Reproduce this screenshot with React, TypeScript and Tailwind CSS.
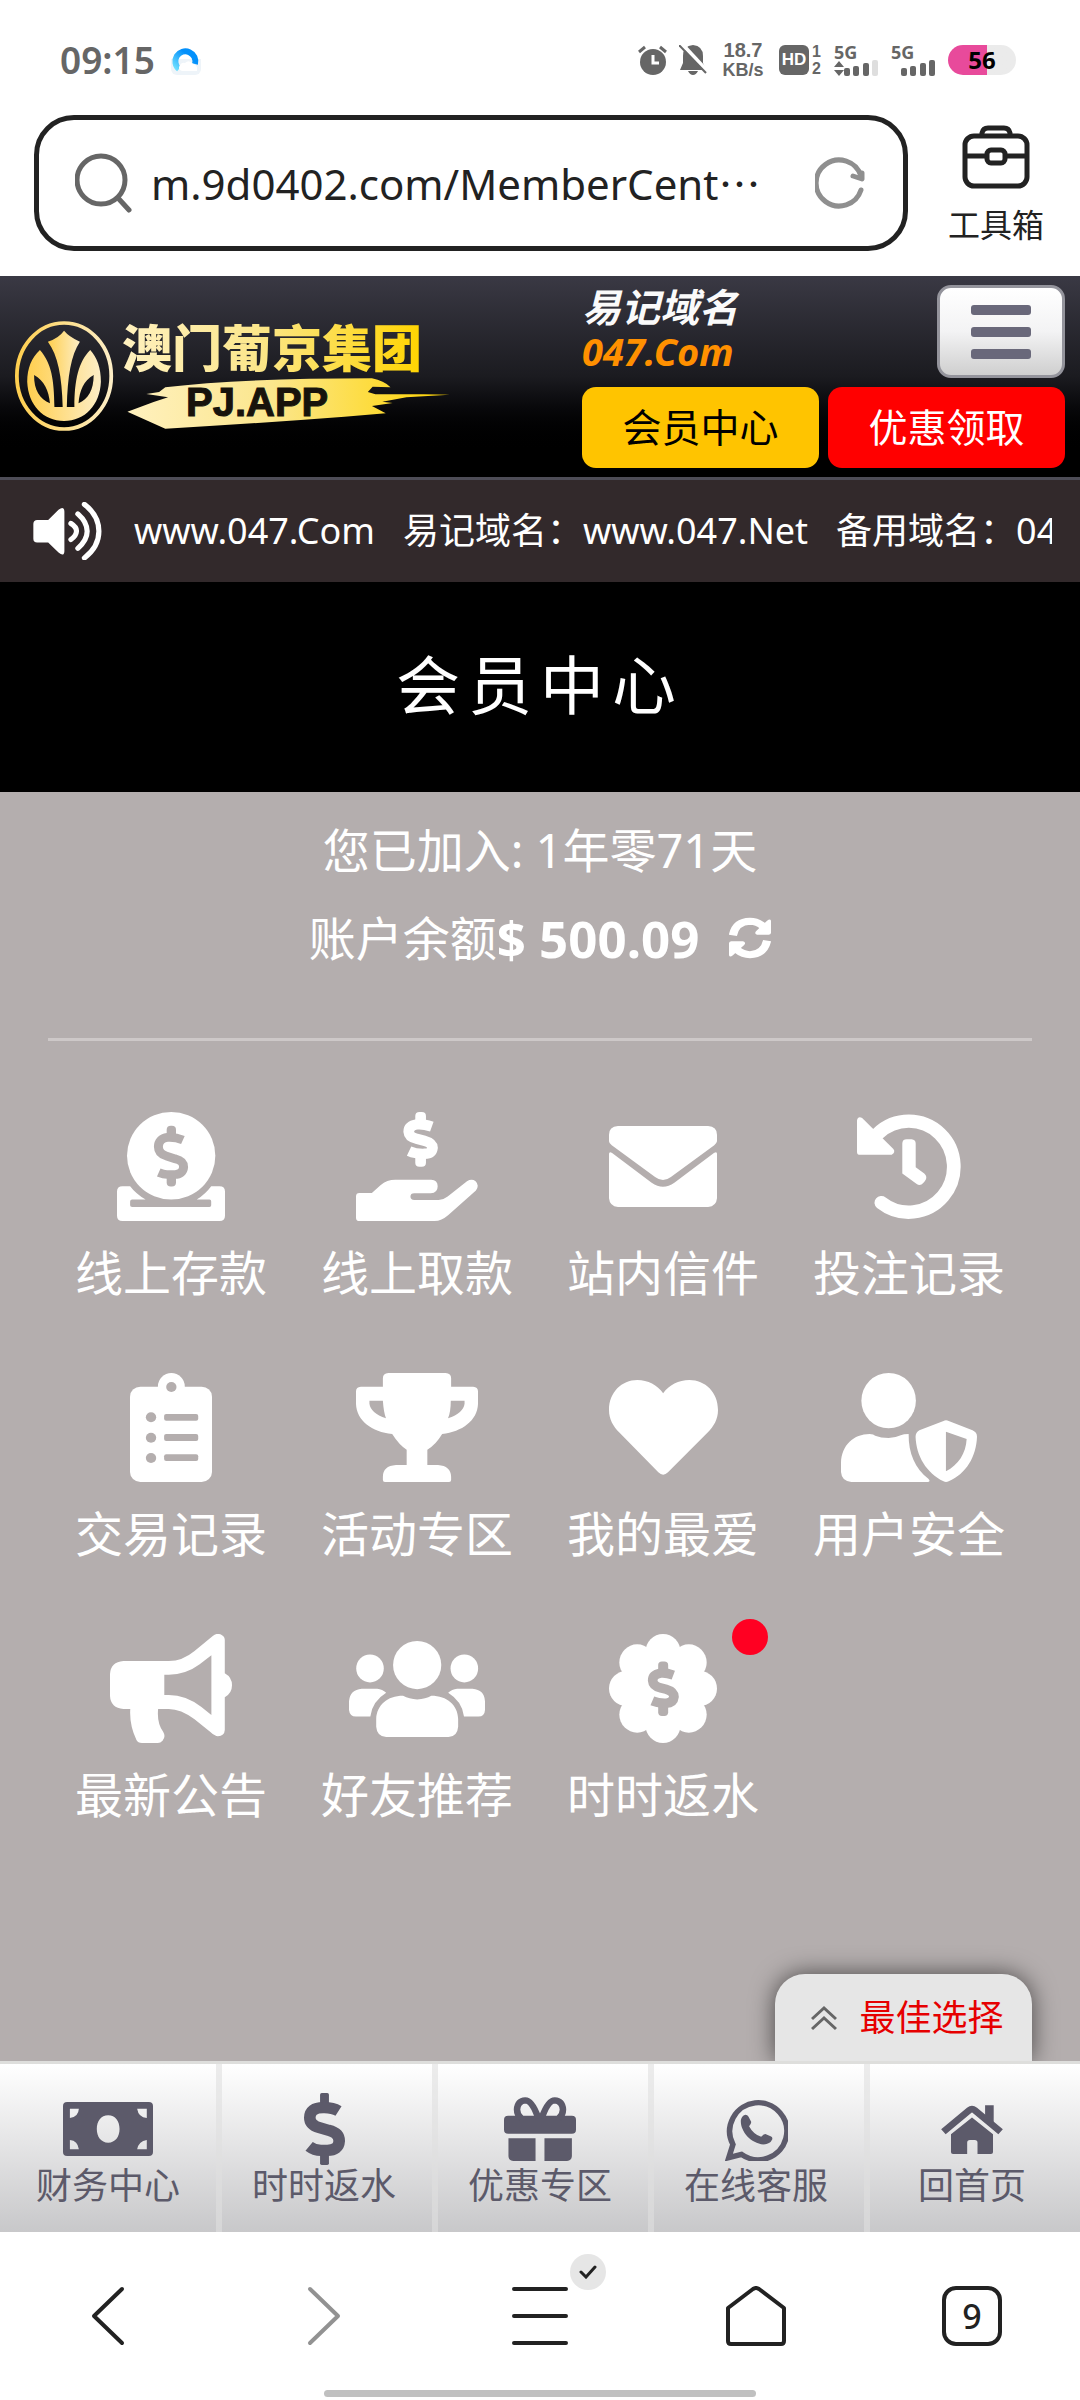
import type { ReactNode } from 'react';

interface GlyphProps {
    box: string;
    w: number;
    h: number;
    children: ReactNode;
}

interface MenuItem {
    label: string;
    icon: ReactNode;
    badge?: boolean;
}

const Glyph = ({ box, w, h, children }: GlyphProps) => (
    <svg viewBox={box} width={w} height={h} preserveAspectRatio="none" fill="currentColor" fillRule="evenodd" aria-hidden="true">
        {children}
    </svg>
);

const DepositIcon = () => (
    <Glyph box="340 97 313 326" w={108} h={109}>
        <ellipse cx="497" cy="228" rx="128" ry="131" />
        <path d="M378 319H356Q340 319 340 335V407Q340 423 356 423H637Q653 423 653 407V335Q653 319 637 319H613Q597 342 571 359H608Q613 359 613 365V376Q613 381 608 381H384Q378 381 378 376V365Q378 359 384 359H423Q395 342 378 319Z" />
        <g className="fill-[#b4aeae] stroke-[#b4aeae]">
            <rect x="484" y="138" width="27" height="36" rx="12" stroke="none" />
            <rect x="484" y="284" width="27" height="36" rx="12" stroke="none" />
            <path d="M531 181C515 174 500 172 486 173C469 175 460 186 460 201C460 218 470 225 484 229L508 237C524 241 533 247 533 262C532 276 522 284 508 284H485Q475 284 461 278" fill="none" strokeWidth="26" />
        </g>
    </Glyph>
);

const WithdrawIcon = () => (
    <Glyph box="1034 97 354 326" w={122} h={109}>
        <rect x="1206" y="97" width="31" height="40" rx="12" />
        <rect x="1206" y="222" width="31" height="39" rx="12" />
        <path d="M1254 141Q1228 132 1211 134Q1187 138 1187 156Q1188 172 1210 177L1232 183Q1256 190 1256 204Q1254 222 1233 222Q1208 223 1188 214" fill="none" stroke="currentColor" strokeWidth="31" />
        <path d="M1034 349Q1034 339 1044 339H1080L1105 316Q1124 300 1148 300H1252Q1271 301 1271 319Q1271 339 1251 340H1203Q1192 340 1192 350Q1192 360 1203 360H1274Q1288 360 1300 350L1356 304Q1370 296 1381 304Q1393 316 1382 332L1302 405Q1282 423 1262 423H1044Q1034 423 1034 413Z" />
    </Glyph>
);

const MailIcon = () => (
    <Glyph box="200 138 314 243" w={108} h={81}>
        <path d="M226 138H488Q514 140 514 164V184Q513 190 506 196L380 291Q357 309 334 291L208 196Q200 190 200 184V164Q200 140 226 138Z" />
        <path d="M200 221Q201 213 209 219L324 308Q357 332 390 308L505 219Q514 213 514 221V355Q512 379 488 381H226Q202 379 200 355Z" />
    </Glyph>
);

const HistoryIcon = () => (
    <Glyph box="919 101 303 316" w={104} h={105}>
        <path d="M990 368A131 137 0 1 0 980 160" fill="none" stroke="currentColor" strokeWidth="40" strokeLinecap="round" />
        <path d="M919 120Q922 106 934 113L1025 206Q1032 216 1020 224H928Q919 224 919 215Z" />
        <path d="M1051 190Q1051 177 1064 177H1078Q1090 178 1090 190V261L1115 280Q1126 290 1117 303L1112 309Q1103 319 1092 311L1051 280Z" />
    </Glyph>
);

const ClipboardIcon = () => (
    <Glyph box="377 879 238 327" w={82} h={109}>
        <rect x="377" y="920" width="238" height="286" rx="30" />
        <ellipse cx="497" cy="919" rx="39" ry="40" />
        <g className="fill-[#b4aeae]">
            <circle cx="497" cy="921" r="15" />
            <circle cx="438" cy="1012" r="15" />
            <circle cx="438" cy="1073" r="15" />
            <circle cx="438" cy="1134" r="15" />
            <rect x="476" y="1002" width="99" height="20" rx="6" />
            <rect x="476" y="1062" width="99" height="21" rx="6" />
            <rect x="476" y="1123" width="99" height="20" rx="6" />
        </g>
    </Glyph>
);

const TrophyIcon = () => (
    <Glyph box="1034 879 354 327" w={122} h={109}>
        <path d="M1128 879H1294Q1310 880 1310 895V920H1374Q1388 921 1388 934V972C1386 1022 1342 1055 1284 1062Q1265 1095 1241 1109V1155H1272Q1309 1158 1310 1190V1200Q1310 1206 1304 1206H1118Q1112 1206 1112 1200V1190Q1112 1158 1150 1155H1181V1109Q1160 1096 1139 1062C1080 1056 1036 1022 1034 972V934Q1034 921 1048 920H1112V895Q1112 880 1128 879ZM1073 962H1112Q1114 995 1121 1015Q1076 998 1073 971ZM1349 962H1309Q1309 995 1301 1015Q1346 998 1349 971Z" />
    </Glyph>
);

const HeartIcon = () => (
    <Glyph box="200 900 316 286" w={109} h={95}>
        <path d="M357 940C340 915 313 900 282 900C237 900 200 937 200 990C200 1018 212 1039 230 1058L343 1178Q357 1192 371 1178L486 1058C504 1039 516 1018 516 990C516 937 479 900 433 900C402 900 374 915 357 940Z" />
    </Glyph>
);

const UserShieldIcon = () => (
    <Glyph box="875 879 394 327" w={136} h={109}>
        <ellipse cx="1013" cy="962" rx="79" ry="83" />
        <path d="M958 1062Q970 1062 974 1067Q990 1074 1013 1074Q1032 1074 1048 1066Q1056 1062 1071 1062C1070 1120 1090 1166 1128 1196Q1136 1204 1126 1206H905Q877 1204 875 1176V1148C877 1095 912 1062 958 1062Z" />
        <path d="M1172 1023Q1179 1019 1187 1023L1256 1051Q1269 1057 1269 1070C1267 1130 1238 1180 1187 1204Q1179 1208 1172 1204C1122 1178 1093 1128 1091 1070Q1091 1058 1102 1051ZM1179 1055V1174C1215 1155 1237 1120 1239 1077Z" />
    </Glyph>
);

const BullhornIcon = () => (
    <Glyph box="319 132 355 327" w={122} h={109}>
        <path d="M358 213H490Q530 213 565 183L618 138Q630 127 644 135Q653 140 653 150V250Q674 262 674 286Q674 310 653 322V420Q652 438 633 439Q624 438 612 427L565 388Q525 357 490 357H459Q455 400 474 426Q482 440 472 452Q466 459 458 459H412Q400 459 396 450Q375 405 378 357H358Q321 354 319 318V252Q321 216 358 213ZM477 254V315H490Q540 315 585 351L614 375V196L580 223Q540 254 490 254Z" />
    </Glyph>
);

const UsersIcon = () => (
    <Glyph box="1013 152 395 287" w={136} h={96}>
        <ellipse cx="1211" cy="224" rx="70" ry="72" />
        <ellipse cx="1074" cy="234" rx="40" ry="42" />
        <ellipse cx="1348" cy="234" rx="40" ry="42" />
        <path d="M1170 316Q1188 326 1211 327Q1236 326 1252 316C1298 316 1329 344 1330 385V408Q1328 437 1302 439H1121Q1094 437 1092 408V385C1094 344 1124 316 1170 316Z" />
        <path d="M1050 295H1095Q1110 296 1121 307Q1080 333 1075 378H1033Q1015 377 1013 358V332Q1016 298 1050 295Z" />
        <path d="M1372 295H1327Q1312 296 1301 307Q1342 333 1347 378H1389Q1407 377 1408 358V332Q1406 298 1372 295Z" />
    </Glyph>
);

const RebateIcon = () => (
    <Glyph box="200 133 314 326" w={108} h={109}>
        <ellipse cx="357" cy="296" rx="115" ry="119" />
        <ellipse cx="357" cy="186" rx="51" ry="53" />
        <ellipse cx="357" cy="406" rx="51" ry="53" />
        <ellipse cx="251" cy="296" rx="51" ry="53" />
        <ellipse cx="463" cy="296" rx="51" ry="53" />
        <ellipse cx="282" cy="218" rx="52" ry="54" />
        <ellipse cx="432" cy="218" rx="52" ry="54" />
        <ellipse cx="282" cy="374" rx="52" ry="54" />
        <ellipse cx="432" cy="374" rx="52" ry="54" />
        <g className="fill-[#b4aeae] stroke-[#b4aeae]">
            <rect x="343" y="215" width="29" height="36" rx="11" stroke="none" />
            <rect x="343" y="342" width="29" height="36" rx="11" stroke="none" />
            <path d="M387 256Q365 248 350 250Q327 254 327 272Q328 289 350 294L366 298Q389 305 389 321Q387 340 366 340Q345 341 326 333" fill="none" strokeWidth="28" />
        </g>
    </Glyph>
);

const MoneyIcon = () => (
    <Glyph box="183 486 261 162" w={90} h={54}>
        <path d="M195 486H432Q444 486 444 498V636Q444 648 432 648H195Q183 648 183 636V498Q183 486 195 486ZM203 506V534Q228 530 229 506ZM426 506H398Q402 532 426 534ZM203 628H229Q226 602 203 600ZM426 628V600Q402 604 398 628ZM314 526C293 526 281 544 281 567C281 590 293 608 314 608C335 608 347 590 347 567C347 544 335 526 314 526Z" />
    </Glyph>
);

const DollarIcon = () => (
    <Glyph box="882 459 120 216" w={41} h={72}>
        <rect x="929" y="459" width="26" height="45" rx="5" />
        <rect x="929" y="630" width="26" height="45" rx="5" />
        <path d="M983 513C965 502 950 503 938 503C912 503 899 513 899 533C899 550 911 558 927 563L954 571C974 576 985 586 985 603C984 622 972 631 950 631H932Q912 631 897 619" fill="none" stroke="currentColor" strokeWidth="34" />
    </Glyph>
);

const GiftIcon = () => (
    <Glyph box="0 471 210 191" w={72} h={64}>
        <rect x="0" y="527" width="210" height="54" rx="12" />
        <path d="M13 594H92V662H27Q13 661 13 648ZM118 594H198V648Q197 661 184 662H118Z" />
        <path d="M100 534Q82 481 62 481Q40 482 38 508Q38 524 50 534M110 534Q128 481 148 481Q170 482 172 508Q172 524 160 534" fill="none" stroke="currentColor" strokeWidth="19" />
    </Glyph>
);

const ServiceIcon = () => (
    <Glyph box="536 471 183 190" w={63} h={63}>
        <path d="M584 641L547 651L559 611A83 86 0 1 1 584 641Z" fill="none" stroke="currentColor" strokeWidth="16" />
        <path d="M593 522Q601 521 604 527L612 543Q613 548 606 556Q618 580 641 588Q648 579 655 580L670 587Q675 590 673 596Q667 610 648 611C610 608 580 570 582 538Q584 526 593 522Z" />
    </Glyph>
);

const HouseIcon = () => (
    <Glyph box="1164 506 180 148" w={62} h={49}>
        <path d="M1171 587L1246 522Q1254 515 1262 522L1337 587" fill="none" stroke="currentColor" strokeWidth="20" />
        <path d="M1292 507H1317V568L1292 546Z" />
        <path d="M1193 594L1254 544L1315 594V648Q1315 654 1309 654H1270V620Q1270 612 1262 612H1248Q1240 612 1240 620V654H1199Q1193 654 1193 648Z" />
    </Glyph>
);

const menuItems: MenuItem[] = [
    { label: '线上存款', icon: <DepositIcon /> },
    { label: '线上取款', icon: <WithdrawIcon /> },
    { label: '站内信件', icon: <MailIcon /> },
    { label: '投注记录', icon: <HistoryIcon /> },
    { label: '交易记录', icon: <ClipboardIcon /> },
    { label: '活动专区', icon: <TrophyIcon /> },
    { label: '我的最爱', icon: <HeartIcon /> },
    { label: '用户安全', icon: <UserShieldIcon /> },
    { label: '最新公告', icon: <BullhornIcon /> },
    { label: '好友推荐', icon: <UsersIcon /> },
    { label: '时时返水', icon: <RebateIcon />, badge: true },
];

const tabs: MenuItem[] = [
    { label: '财务中心', icon: <MoneyIcon /> },
    { label: '时时返水', icon: <DollarIcon /> },
    { label: '优惠专区', icon: <GiftIcon /> },
    { label: '在线客服', icon: <ServiceIcon /> },
    { label: '回首页', icon: <HouseIcon /> },
];

const Signal = ({ weak }: { weak?: boolean }) => (
    <svg width="45" height="40" viewBox="0 -5 45 40" fill="currentColor" aria-hidden="true">
        <text x="0" y="14" fontSize="18" fontWeight="700">5G</text>
        {weak && <path d="M0 22L5 16L10 22ZM0 25H10L5 31Z" />}
        <rect x="10" y="23" width="6" height="8" rx="2" />
        <rect x="19" y="21" width="6" height="10" rx="2" />
        <rect x="29" y="18" width="6" height="13" rx="2" />
        <rect x="38" y="15" width="6" height="16" rx="2" className={weak ? 'fill-[#dedede]' : ''} />
    </svg>
);

const StatusBar = () => (
    <div className="flex h-[115px] items-center justify-between pl-[60px] pr-16 pt-1 text-[#666]">
        <div className="flex items-center gap-4">
            <span className="font-['Noto_Sans'] text-[37px] font-semibold leading-none">09:15</span>
            <svg width="30" height="30" viewBox="0 0 30 30" aria-hidden="true">
                <defs>
                    <linearGradient id="ring" x1="1" y1="0" x2="0" y2="1">
                        <stop offset="0.3" stopColor="#0390fb" />
                        <stop offset="1" stopColor="#6fe0ff" />
                    </linearGradient>
                </defs>
                <rect width="30" height="30" rx="6" fill="#eef4f9" />
                <rect width="30" height="14" fill="#fff" />
                <path d="M8 24A10 10 0 1 1 24 19" fill="none" stroke="url(#ring)" strokeWidth="6" />
                <path d="M11 26Q6 24 9 20Q11 17 14 18Q18 14 22 19Q27 20 26 26Z" fill="#fff" />
            </svg>
        </div>
        <div className="flex items-center gap-3">
            <svg width="29" height="30" viewBox="0 0 29 30" aria-hidden="true">
                <circle cx="15" cy="17" r="13" fill="currentColor" />
                <path d="M1 7L7 2M22 2L28 7" stroke="currentColor" strokeWidth="3" />
                <path d="M15 10V18H21" fill="none" stroke="#fff" strokeWidth="3" />
            </svg>
            <svg width="28" height="30" viewBox="0 0 28 30" aria-hidden="true">
                <path d="M14 0Q24 1 24 11V18L27 25H1L4 18V11Q4 1 14 0ZM9 26H19Q17 30 14 30Q11 30 9 26Z" fill="currentColor" />
                <path d="M3 -1L29 27" stroke="#fff" strokeWidth="4" />
                <path d="M0 0L27 28" stroke="currentColor" strokeWidth="2" />
            </svg>
            <div className="flex w-12 flex-col items-center font-['Liberation_Sans'] text-[20px] font-bold leading-5">
                <span>18.7</span>
                <span className="text-[18px]">KB/s</span>
            </div>
            <div className="flex items-center gap-[2px]">
                <span className="flex h-[30px] w-[30px] items-center justify-center rounded-md bg-[#666] font-['Liberation_Sans'] text-[17px] font-bold text-white">HD</span>
                <span className="flex w-[11px] flex-col items-center font-['Liberation_Sans'] text-[16px] font-bold leading-[17px]">
                    <span>1</span>
                    <span>2</span>
                </span>
            </div>
            <Signal weak />
            <Signal />
            <div className="flex h-[30px] w-[68px] items-center justify-center rounded-full bg-linear-to-r from-[#e84a9b] from-57% to-[#ebebeb] to-57% font-['Open_Sans'] text-[24px] font-bold leading-none text-black">
                56
            </div>
        </div>
    </div>
);

const AddressBar = () => (
    <div className="flex items-center gap-10 pb-[25px] pl-[34px] pr-9">
        <div className="flex h-[136px] flex-1 items-center rounded-[40px] border-[5px] border-[#222] pl-9 pr-[38px]">
            <svg width="58" height="60" viewBox="0 0 58 60" fill="none" stroke="#666" strokeWidth="5" strokeLinecap="round" aria-hidden="true">
                <circle cx="26" cy="27" r="24" />
                <path d="M43 45L54 57" />
            </svg>
            <input
                aria-label="地址"
                readOnly
                value="m.9d0402.com/MemberCent⋯"
                className="min-w-0 flex-1 bg-transparent pl-[18px] font-['Noto_Sans','Noto_Sans_CJK_SC',sans-serif] text-[42px] text-[#222] outline-none"
            />
            <button aria-label="刷新" className="text-[#8f8f8f]">
                <svg width="50" height="52" viewBox="0 0 50 52" fill="none" stroke="currentColor" strokeWidth="5" strokeLinecap="round" aria-hidden="true">
                    <path d="M46 33A23 23 0 1 1 46 19" />
                    <path d="M38 19L47 22V16" strokeLinejoin="round" />
                </svg>
            </button>
        </div>
        <button className="flex flex-col items-center gap-4 pt-1 text-[#222]">
            <svg width="68" height="64" viewBox="0 0 68 64" fill="none" stroke="currentColor" strokeWidth="5" aria-hidden="true">
                <rect x="3" y="11" width="62" height="50" rx="9" />
                <path d="M20 11V8Q21 3 26 3H42Q47 3 48 8V11M3 31H25M43 31H65" />
                <rect x="25" y="25" width="18" height="13" rx="4" />
            </svg>
            <span className="text-[32px] leading-10">工具箱</span>
        </button>
    </div>
);

const Logo = () => (
    <svg width="460" height="200" viewBox="0 0 460 200" role="img" aria-label="澳门葡京集团 PJ.APP">
        <defs>
            <linearGradient id="gold" x1="0" x2="1" y1="0" y2="0">
                <stop offset="0" stopColor="#fff1bf" />
                <stop offset="0.45" stopColor="#fbe68c" />
                <stop offset="1" stopColor="#ffd400" />
            </linearGradient>
            <linearGradient id="emblem" x1="0" x2="1" y1="0" y2="0">
                <stop offset="0" stopColor="#ffcf4f" />
                <stop offset="1" stopColor="#fdeec6" />
            </linearGradient>
        </defs>
        <g transform="translate(0 -6) scale(.3444 .3333)">
            <ellipse cx="186" cy="318" rx="137" ry="159" fill="none" stroke="url(#emblem)" strokeWidth="11" />
            <g fill="url(#emblem)" fillRule="evenodd">
                <path d="M116 240C92 262 79 295 79 335C82 405 125 452 186 453C247 452 290 405 293 335C293 295 282 262 262 240C228 275 216 330 216 411H158C157 330 150 280 116 240ZM99 315C98 360 116 388 145 400C142 362 128 332 99 315ZM272 315C243 332 231 362 228 400C256 388 272 360 272 315Z" />
                <path d="M186 182Q200 200 232 215C206 255 196 320 194 411H182C180 320 168 255 139 215Q171 204 186 182Z" />
            </g>
            <path d="M370 425L446 396L488 382L425 372L462 366L480 352Q700 325 1080 325Q1115 332 1134 352L1082 350L1068 366L1090 373H1230L1305 374L1180 382L1110 395L1140 399L1080 408L1120 430L1000 440Q750 460 480 476Z" fill="url(#gold)" />
        </g>
        <text x="122" y="91" fontSize="50" fontWeight="900" fill="url(#gold)">澳门葡京集团</text>
        <text x="186" y="140" fontSize="40" fontWeight="700" fill="#17130c" stroke="#17130c" className="font-['Liberation_Sans']">PJ.APP</text>
    </svg>
);

const SiteHeader = () => (
    <header className="flex h-[204px] items-start justify-between border-b-[3px] border-[#4e4d57] bg-linear-to-b from-[#3a3944] via-[#1b1b20] to-black to-90% pr-[15px]">
        <Logo />
        <div className="flex flex-col gap-[9px] pt-[9px]">
            <div className="flex items-start justify-between">
                <div className="flex flex-col font-bold italic">
                    <span className="text-[39px] leading-[44px] text-[#fafafa]">易记域名</span>
                    <span className="font-['Noto_Sans'] text-[38px] leading-[45px] text-[#ff9000]">047.Com</span>
                </div>
                <button aria-label="菜单" className="flex h-[93px] w-32 flex-col items-center justify-center gap-3 rounded-[14px] border-[3px] border-[#94949c] bg-linear-to-b from-white via-[#f3f3f4] to-[#cfcfcf]">
                    <span className="h-[10px] w-[60px] rounded-[3px] bg-[#69687a]" />
                    <span className="h-[10px] w-[60px] rounded-[3px] bg-[#69687a]" />
                    <span className="h-[10px] w-[60px] rounded-[3px] bg-[#69687a]" />
                </button>
            </div>
            <div className="flex gap-[9px]">
                <a href="#member" className="flex h-[81px] w-[237px] items-center justify-center rounded-[14px] bg-[#ffc400] text-[39px] text-black">会员中心</a>
                <a href="#promo" className="flex h-[81px] w-[237px] items-center justify-center rounded-[14px] bg-[#ff0000] text-[39px] text-white">优惠领取</a>
            </div>
        </div>
    </header>
);

const Notice = () => (
    <div className="flex h-[102px] items-center gap-8 bg-[#32292b] pl-[33px] pr-7 text-white">
        <svg width="69" height="58" viewBox="96 696 200 170" preserveAspectRatio="none" className="shrink-0" aria-hidden="true">
            <path d="M108 749H140L170 719Q186 706 187 724V840Q186 858 170 844L140 815H108Q97 815 97 804V760Q98 749 108 749Z" fill="currentColor" />
            <path d="M206 759Q223 770 222 782Q221 795 206 806M226 731Q253 755 253 782Q253 808 226 832M245 703Q287 735 287 782Q287 828 245 860" fill="none" stroke="currentColor" strokeWidth="15" strokeLinecap="round" />
        </svg>
        <div className="flex min-w-0 gap-7 overflow-hidden whitespace-nowrap text-[36px]">
            <span>www.047.Com</span>
            <span>易记域名：www.047.Net</span>
            <span>备用域名：047.Com</span>
        </div>
    </div>
);

export default function App() {
    return (
        <div className="flex min-h-screen flex-col bg-white font-['Noto_Sans','Noto_Sans_CJK_SC',sans-serif]" lang="zh-CN">
            <StatusBar />
            <AddressBar />
            <SiteHeader />
            <Notice />

            <h1 className="flex h-[210px] items-center justify-center bg-black pb-1 text-[64px] tracking-[8px] text-white">会员中心</h1>

            <main className="flex flex-1 flex-col overflow-hidden bg-[#b4aeae] px-12 text-white">
                <div className="flex flex-col items-center pt-[14px] text-[47px] leading-[88px]">
                    <p>您已加入: 1年零71天</p>
                    <p className="flex items-center">
                        账户余额<strong className="text-[51px]">$ 500.09</strong>
                        <button aria-label="刷新余额" className="ml-[30px]">
                            <svg width="42" height="42" viewBox="1286 1012 108 126" preserveAspectRatio="none" aria-hidden="true">
                                <path d="M1296 1067Q1303 1026 1340 1025Q1358 1025 1374 1040M1384 1083Q1376 1124 1340 1125Q1322 1125 1306 1110" fill="none" stroke="currentColor" strokeWidth="21" />
                                <path d="M1394 1023V1060Q1393 1065 1388 1065H1358Q1350 1062 1356 1054L1384 1023Q1392 1016 1394 1023ZM1286 1127V1090Q1287 1085 1292 1085H1322Q1331 1088 1325 1096L1296 1127Q1288 1134 1286 1127Z" fill="currentColor" />
                            </svg>
                        </button>
                    </p>
                </div>
                <hr className="mt-14 border-t-[3px] border-[#cdc8c8]" />

                <nav className="mt-[71px] grid grid-cols-4 gap-y-[68px]">
                    {menuItems.map((item) => (
                        <a key={item.label} href="#menu" className="relative flex flex-col items-center gap-5">
                            <span className="flex h-[109px] items-center">{item.icon}</span>
                            <span className="text-[48px] leading-[64px]">{item.label}</span>
                            {item.badge && <span className="absolute -top-[15px] right-[18px] h-9 w-9 rounded-full bg-[#ff0022]" />}
                        </a>
                    ))}
                </nav>

                <button className="mt-auto flex h-[87px] w-[257px] items-center justify-center gap-[22px] self-end rounded-t-[30px] bg-[#e6e6e6] pl-2 text-[36px] text-[#e60000] shadow-[0_0_24px_rgba(0,0,0,0.6)]">
                    <svg width="26" height="26" viewBox="0 0 26 26" fill="none" stroke="#666" strokeWidth="3" aria-hidden="true">
                        <path d="M1 14L13 3L25 14M1 24L13 13L25 24" />
                    </svg>
                    最佳选择
                </button>
            </main>

            <footer>
                <nav className="grid grid-cols-5 border-t-[3px] border-[#dededc] bg-linear-to-b from-white to-[#c8c8ca] text-[#5c5a6a]">
                    {tabs.map((tab, index) => (
                        <a
                            key={tab.label}
                            href="#tab"
                            className={`flex h-[168px] flex-col items-center pt-[29px] ${index > 0 ? 'shadow-[inset_6px_0_0_rgba(223,223,223,0.6)]' : ''}`}
                        >
                            <span className="flex h-[72px] items-center">{tab.icon}</span>
                            <span className="text-[36px] leading-[42px]">{tab.label}</span>
                        </a>
                    ))}
                </nav>
                <div className="relative grid h-[168px] grid-cols-5 place-items-center text-[#222]">
                    <button aria-label="后退">
                        <svg width="34" height="60" viewBox="0 0 34 60" fill="none" stroke="currentColor" strokeWidth="4" strokeLinecap="round" strokeLinejoin="round" aria-hidden="true">
                            <path d="M31 3L3 30L31 57" />
                        </svg>
                    </button>
                    <button aria-label="前进" className="text-[#929292]">
                        <svg width="34" height="60" viewBox="0 0 34 60" fill="none" stroke="currentColor" strokeWidth="4" strokeLinecap="round" strokeLinejoin="round" aria-hidden="true">
                            <path d="M3 3L31 30L3 57" />
                        </svg>
                    </button>
                    <button aria-label="菜单" className="relative">
                        <svg width="60" height="60" viewBox="0 0 60 60" stroke="currentColor" strokeWidth="4" strokeLinecap="round" aria-hidden="true">
                            <path d="M4 3H56M4 30H56M4 57H56" />
                        </svg>
                        <span className="absolute -right-9 -top-8 flex h-9 w-9 items-center justify-center rounded-full bg-[#e6e6e6]">
                            <svg width="18" height="14" viewBox="0 0 18 14" fill="none" stroke="currentColor" strokeWidth="3" strokeLinecap="round" aria-hidden="true">
                                <path d="M2 7L7 12L16 2" />
                            </svg>
                        </span>
                    </button>
                    <button aria-label="主页">
                        <svg width="60" height="60" viewBox="0 0 60 60" fill="none" stroke="currentColor" strokeWidth="4" strokeLinejoin="round" aria-hidden="true">
                            <path d="M2 22L27 3Q30 1 33 3L58 22V55Q58 58 55 58H5Q2 58 2 55Z" />
                        </svg>
                    </button>
                    <button aria-label="标签页" className="flex h-[60px] w-[60px] items-center justify-center rounded-[14px] border-4 border-[#222] text-[34px] font-medium leading-none">
                        9
                    </button>
                    <span className="absolute bottom-[3px] left-3/10 h-[7px] w-2/5 rounded-full bg-[#c0c0c0]" />
                </div>
            </footer>
        </div>
    );
}
